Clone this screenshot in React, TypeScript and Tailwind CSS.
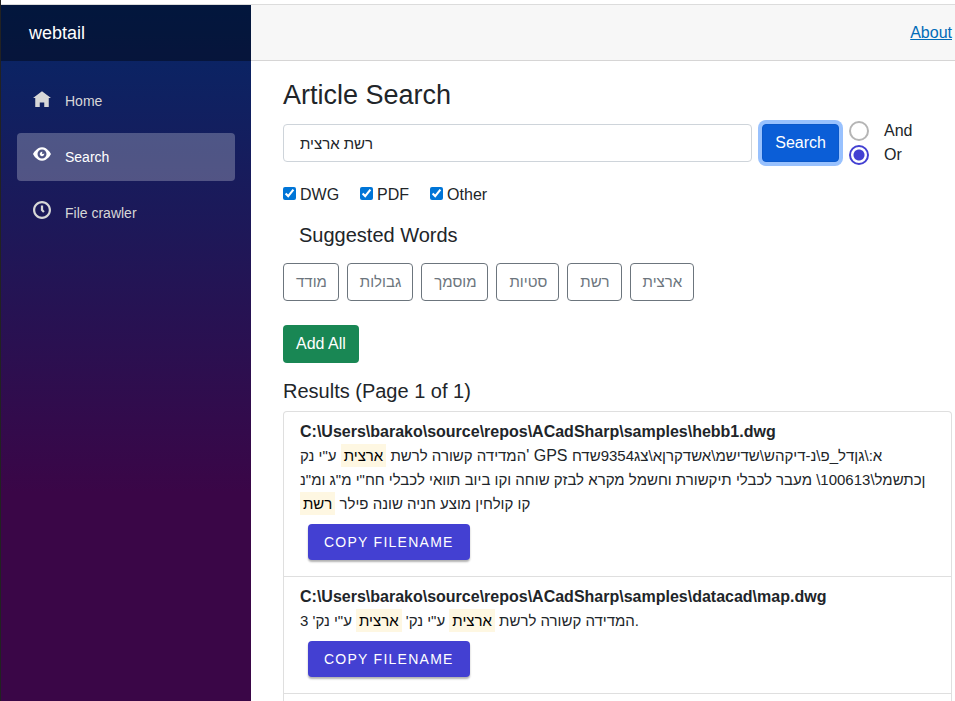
import { ReactNode, useState } from "react";

const icons = {
  home: "M4 1l-4 3h1v4h2v-2h2v2h2v-4.03l1 .03-4-3z",
  eye: "M4.03 1c-2.53 0-4.03 3-4.03 3s1.5 3 4.03 3c2.47 0 3.97-3 3.97-3s-1.5-3-3.97-3zm-.03 1c1.11 0 2 .9 2 2 0 1.11-.89 2-2 2-1.1 0-2-.89-2-2 0-1.1.9-2 2-2zm0 1c-.55 0-1 .45-1 1s.45 1 1 1 1-.45 1-1c0-.1-.04-.19-.06-.28-.08.16-.24.28-.44.28-.28 0-.5-.22-.5-.5 0-.2.12-.36.28-.44-.09-.03-.18-.06-.28-.06z",
  clock:
    "M4 0c-2.2 0-4 1.8-4 4s1.8 4 4 4 4-1.8 4-4-1.8-4-4-4zm0 1c1.66 0 3 1.34 3 3s-1.34 3-3 3-3-1.34-3-3 1.34-3 3-3zm-.5 1v2.22l.16.13.5.5.34.38.72-.72-.38-.34-.34-.34v-1.81h-1z",
};

const navItems = [
  { label: "Home", icon: icons.home, active: false },
  { label: "Search", icon: icons.eye, active: true },
  { label: "File crawler", icon: icons.clock, active: false },
];

const suggestions = ["מודד", "גבולות", "מוסמך", "סטיות", "רשת", "ארצית"];

function Mark({ children }: { children: ReactNode }) {
  return <mark className="bg-[#fef7e2] p-[3px] text-black">{children}</mark>;
}

function Result({ file, children }: { file: string; children: ReactNode }) {
  return (
    <li className="border-b border-[#dfdfdf] px-4 py-2">
      <h5 className="font-bold">{file}</h5>
      <p className="text-[15px] leading-6">{children}</p>
      <button
        type="button"
        className="m-2 block h-9 rounded bg-[#4340d2] px-4 text-sm tracking-[0.09em] text-white uppercase shadow-[0_2px_2px_rgba(0,0,0,0.3)]"
      >
        Copy filename
      </button>
    </li>
  );
}

export default function App() {
  const [query, setQuery] = useState("רשת ארצית");
  const [mode, setMode] = useState("Or");

  return (
    <div className="flex h-screen flex-col overflow-hidden border-l border-[#222] bg-white pt-1 font-['Liberation_Sans',Arial,sans-serif] text-base text-[#212529]">
      <div className="flex min-h-0 flex-1 border-t border-[#dcdcdc]">
        <aside className="w-[250px] shrink-0 bg-[linear-gradient(180deg,#052767_0%,#3a0647_70%)]">
          <div className="flex h-14 items-center bg-black/40 px-7">
            <a href="#" className="text-lg text-white">
              webtail
            </a>
          </div>
          <nav className="flex flex-col gap-2 px-4 pt-4">
            {navItems.map((item) => (
              <a
                key={item.label}
                href="#"
                className={
                  item.active
                    ? "flex h-12 rounded bg-white/25 px-4 text-sm leading-[48px] text-white"
                    : "flex h-12 rounded px-4 text-sm leading-[48px] text-[#d7d7d7]"
                }
              >
                <span className="w-8 pt-3">
                  <svg viewBox="0 0 8 8" className="size-[18px] fill-current" aria-hidden="true">
                    <path d={item.icon} />
                  </svg>
                </span>
                {item.label}
              </a>
            ))}
          </nav>
        </aside>

        <main className="flex min-w-0 flex-1 flex-col">
          <header className="flex h-14 shrink-0 items-center justify-end border-b border-[#d6d5d5] bg-[#f7f7f7] pr-[3px]">
            <a href="#" className="text-[#006bb7] underline">
              About
            </a>
          </header>

          <article className="flex min-h-0 flex-1 flex-col pt-[17px] pr-[3px] pl-8">
            <h3 className="mb-[6px] text-[27px] leading-[35px]">Article Search</h3>

            <form className="flex items-center" onSubmit={(e) => e.preventDefault()}>
              <input
                type="text"
                aria-label="Search text"
                value={query}
                onChange={(e) => setQuery(e.target.value)}
                className="h-[38px] min-w-0 flex-1 rounded border border-[#ced4da] px-4 text-[15px] outline-none"
              />
              <button
                type="submit"
                className="ml-[10px] h-[38px] rounded border border-[#0a58ca] bg-[#0b5ed7] px-3 text-white shadow-[0_0_0_4px_#98c1fe]"
              >
                Search
              </button>
              <div className="ml-[10px] w-[103px]">
                {["And", "Or"].map((name) => (
                  <label key={name} className="flex h-6 items-center gap-[15px]">
                    <input
                      type="radio"
                      name="mode"
                      checked={mode === name}
                      onChange={() => setMode(name)}
                      className="size-5 appearance-none rounded-full border-2 border-[#b5b5b5] checked:border-[#4340d2] checked:bg-[radial-gradient(circle,#4340d2_5px,transparent_6px)]"
                    />
                    {name}
                  </label>
                ))}
              </div>
            </form>

            <div className="mt-4 flex gap-[21px]">
              {["DWG", "PDF", "Other"].map((name) => (
                <label key={name} className="flex h-6 items-center gap-1">
                  <input type="checkbox" defaultChecked className="mb-[3px] size-[13px] accent-[#0075d7]" />
                  {name}
                </label>
              ))}
            </div>

            <h5 className="mt-4 px-4 text-xl leading-6">Suggested Words</h5>
            <div className="mt-4 flex flex-wrap gap-2">
              {suggestions.map((word) => (
                <button
                  key={word}
                  type="button"
                  className="h-[38px] rounded border border-[#6c757d] pr-[11px] pl-3 text-[15px] text-[#6c757d]"
                >
                  {word}
                </button>
              ))}
            </div>
            <button
              type="button"
              className="mt-6 h-[38px] shrink-0 self-start rounded bg-[#198754] px-[13px] text-white"
            >
              Add All
            </button>

            <h5 className="mt-4 mb-2 text-xl leading-6">Results (Page 1 of 1)</h5>
            <ul className="min-h-0 flex-1 rounded-t border-x border-t border-[#dfdfdf]">
              <Result file="C:\Users\barako\source\repos\ACadSharp\samples\hebb1.dwg">
                המדידה קשורה לרשת <Mark>ארצית</Mark>
                {" ע\"י נק"}
                <span className="text-base leading-6">{"' GPS "}</span>
                {"א:\\גןדל_פ\\נ-דיקהש\\שדישמ\\אשדקרןא\\צג9354שדח "}
                {"ןכתשמל\\100613\\ מעבר לכבלי תיקשורת וחשמל מקרא לבזק שוחה וקו ביוב תוואי לכבלי חח\"י מ\"ג ומ\"נ "}
                {"קו קולחין מוצע חניה שונה פילר "}
                <Mark>רשת</Mark>
              </Result>
              <Result file="C:\Users\barako\source\repos\ACadSharp\samples\datacad\map.dwg">
                המדידה קשורה לרשת <Mark>ארצית</Mark>
                {" ע\"י נק' "}
                <Mark>ארצית</Mark>
                {" ע\"י נק' 3"}
                {"."}
              </Result>
            </ul>
          </article>
        </main>
      </div>
    </div>
  );
}
